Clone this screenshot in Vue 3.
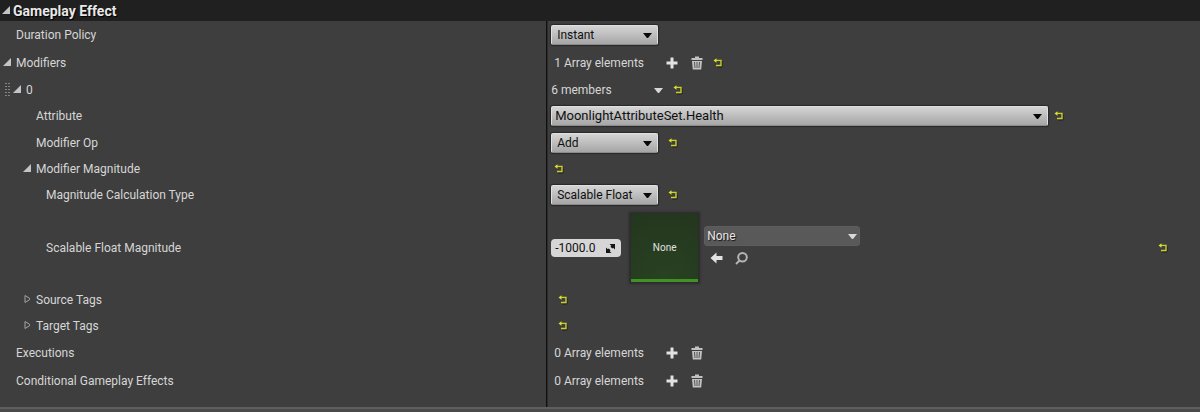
<template>
    <section class="details-panel">
        <header class="category-header">
            <svg class="icon-expanded" viewBox="0 0 8 8"><path d="M8 0V8H0Z" /></svg>
            <h1 class="category-title">Gameplay Effect</h1>
        </header>

        <div class="property-list">
            <div v-for="row in rows" :key="row.id" class="property-row" :class="row.size">
                <div class="name-cell" :class="'level-' + row.level">
                    <svg v-if="row.grip" class="icon-grip" viewBox="0 0 8 14">
                        <path d="M1 0V14M4 0V14" />
                    </svg>
                    <span class="expander-slot">
                        <button
                            v-if="row.expander"
                            class="icon-button"
                            type="button"
                            :aria-label="'Toggle ' + row.name"
                        >
                            <svg v-if="row.expander === 'open'" class="icon-expanded" viewBox="0 0 8 8">
                                <path d="M8 0V8H0Z" />
                            </svg>
                            <svg v-else class="icon-collapsed" viewBox="0 0 8 10">
                                <path d="M2 1.5V8.5L6.5 5.8V4.2Z" />
                            </svg>
                        </button>
                    </span>
                    <label v-if="row.control" :for="row.id">{{ row.name }}</label>
                    <span v-else>{{ row.name }}</span>
                </div>

                <div class="value-cell" :class="row.type">
                    <div v-if="row.type === 'select'" class="combo" :class="{ wide: row.wide }">
                        <select :id="row.id" v-model="row.value">
                            <option>{{ row.value }}</option>
                        </select>
                        <svg class="icon-caret" viewBox="0 0 9 5"><path d="M0 0H9L5 5H4Z" /></svg>
                    </div>

                    <template v-if="row.type === 'array'">
                        <span class="array-count">{{ row.count }} Array elements</span>
                        <button class="icon-button" type="button" aria-label="Add element">
                            <svg class="icon-plus" viewBox="0 0 12 12">
                                <path d="M4.5 0.5H7.5V4.5H11.5V7.5H7.5V11.5H4.5V7.5H0.5V4.5H4.5Z" />
                            </svg>
                        </button>
                        <button class="icon-button trash" type="button" aria-label="Remove all elements">
                            <svg class="icon-trash" viewBox="0 0 12 14">
                                <path class="bin" d="M4 0.5H8V2H11.5V4H0.5V2H4ZM1 5H11L10.2 13.5H1.8Z" />
                                <path class="slots" d="M3.5 6L4 12M6 6V12M8.5 6L8 12" />
                            </svg>
                        </button>
                    </template>

                    <template v-if="row.type === 'members'">
                        <span class="member-count">6 members</span>
                        <button class="icon-button" type="button" aria-label="Element options">
                            <svg class="icon-caret light" viewBox="0 0 9 5"><path d="M0 0H9L5 5H4Z" /></svg>
                        </button>
                    </template>

                    <template v-if="row.type === 'magnitude'">
                        <div class="spin-box">
                            <input :id="row.id" v-model="row.value" type="text">
                            <svg class="icon-drag" viewBox="0 0 9 9">
                                <path d="M3.5 0H9V5.5L7.2 3.7L6.2 4.5L4.5 2.8L5.3 1.8ZM0 3.5L1.8 5.3L2.8 4.5L4.5 6.2L3.7 7.2L5.5 9H0Z" />
                            </svg>
                        </div>
                        <div class="thumbnail">None</div>
                        <div class="asset-picker">
                            <div class="combo asset">
                                <select v-model="curveTable" aria-label="Curve table">
                                    <option>None</option>
                                </select>
                                <svg class="icon-caret light" viewBox="0 0 9 5"><path d="M0 0H9L5 5H4Z" /></svg>
                            </div>
                            <div class="asset-actions">
                                <button class="icon-button" type="button" aria-label="Use selected asset">
                                    <svg class="icon-arrow" viewBox="0 0 13 12">
                                        <path d="M0.5 6L6.5 0.5V4H12.5V8H6.5V11.5Z" />
                                    </svg>
                                </button>
                                <button class="icon-button" type="button" aria-label="Browse to asset">
                                    <svg class="icon-search" viewBox="0 0 13 13">
                                        <circle cx="7.5" cy="5.3" r="4.3" />
                                        <path d="M4.5 8.5L1 12" />
                                    </svg>
                                </button>
                            </div>
                        </div>
                    </template>

                    <button v-if="row.reset" class="icon-button reset" type="button" aria-label="Reset to default">
                        <svg class="icon-reset" viewBox="0 0 10 10">
                            <path class="shade" d="M3 3.5H9V9H4" />
                            <path class="line" d="M2 2.5H8V7.5H3" />
                            <path class="head" d="M0.5 2.5L3.5 0.3V4.7Z" />
                        </svg>
                    </button>
                </div>
            </div>
            <div class="property-row filler">
                <div class="name-cell"></div>
            </div>
        </div>
        <div class="panel-edge"></div>
    </section>
</template>

<script setup>
import { ref } from 'vue'

const curveTable = ref('None')

const rows = ref([
    { id: 'duration', name: 'Duration Policy', level: 0, type: 'select', control: true, value: 'Instant' },
    { id: 'modifiers', name: 'Modifiers', level: 0, expander: 'open', type: 'array', count: 1, reset: true },
    { id: 'modifier-0', name: '0', level: 1, size: 'compact', grip: true, expander: 'open', type: 'members', reset: true },
    {
        id: 'attribute',
        name: 'Attribute',
        level: 2,
        size: 'compact',
        type: 'select',
        control: true,
        wide: true,
        value: 'MoonlightAttributeSet.Health',
        reset: true
    },
    { id: 'modifier-op', name: 'Modifier Op', level: 2, type: 'select', control: true, value: 'Add', reset: true },
    { id: 'magnitude', name: 'Modifier Magnitude', level: 2, size: 'tight', expander: 'open', type: 'group', reset: true },
    {
        id: 'calculation',
        name: 'Magnitude Calculation Type',
        level: 3,
        type: 'select',
        control: true,
        value: 'Scalable Float',
        reset: true
    },
    {
        id: 'scalable-float',
        name: 'Scalable Float Magnitude',
        level: 3,
        size: 'tall',
        type: 'magnitude',
        control: true,
        value: '-1000.0',
        reset: true
    },
    { id: 'source-tags', name: 'Source Tags', level: 2, size: 'compact', expander: 'closed', type: 'tags', reset: true },
    { id: 'target-tags', name: 'Target Tags', level: 2, size: 'compact', expander: 'closed', type: 'tags', reset: true },
    { id: 'executions', name: 'Executions', level: 0, type: 'array', count: 0 },
    { id: 'conditional', name: 'Conditional Gameplay Effects', level: 0, type: 'array', count: 0 }
])
</script>

<style>
body {
    background-color: #3e3e3e;
}
</style>

<style scoped>
.details-panel {
    font-family: Roboto, sans-serif;
    font-size: 12px;
    line-height: 16px;
    color: #d6d6d6;
    background-color: #3e3e3e;
}

.details-panel *,
.details-panel {
    box-sizing: border-box;
}

svg {
    display: block;
    flex: none;
}

.category-header {
    display: flex;
    align-items: center;
    gap: 3px;
    height: 21px;
    padding-left: 2px;
    background-color: #202020;
}

.category-title {
    margin: 0;
    font-size: 14px;
    font-weight: 700;
    line-height: 20px;
    color: #e8e8e8;
    text-shadow: 1px 1px 1px #000;
}

.property-row {
    display: grid;
    grid-template-columns: 45.6% minmax(0, 1fr);
    height: 28px;
}

.property-row.compact {
    height: 26px;
}

.property-row.tight {
    height: 24px;
}

.property-row.tall {
    height: 78px;
}

.property-row.filler {
    height: 12px;
}

.name-cell {
    display: flex;
    align-items: center;
    padding-left: 3px;
    border-right: 1px solid #101010;
    box-shadow: 1px 0 0 #2c2c2c;
}

.name-cell.level-1 {
    padding-left: 5px;
}

.name-cell.level-2 {
    padding-left: 23px;
}

.name-cell.level-3 {
    padding-left: 33px;
}

.expander-slot {
    flex: none;
    width: 13px;
}

.value-cell {
    display: flex;
    align-items: center;
    padding-left: 4px;
}

.value-cell.array,
.value-cell.group {
    padding-left: 7px;
}

.value-cell.tags {
    padding-left: 11px;
}

.value-cell.magnitude {
    padding-right: 32px;
}

.icon-button {
    display: flex;
    align-items: center;
    justify-content: center;
    padding: 0;
    border: none;
    background: none;
    cursor: pointer;
}

.array-count {
    width: 112px;
}

.member-count {
    width: 103px;
}

.trash {
    margin-left: 13px;
}

.reset {
    margin-left: 10px;
}

.combo.wide + .reset {
    margin-left: 6px;
}

.group .reset,
.tags .reset {
    margin-left: 0;
}

.magnitude .reset {
    margin-left: auto;
}

/* Combo boxes */
.combo {
    position: relative;
    width: 107px;
}

.combo select {
    display: block;
    width: 100%;
    height: 20px;
    padding: 0 18px 0 5px;
    appearance: none;
    border: 1px solid #e0e0e0;
    border-bottom-color: #8a8a8a;
    border-radius: 2px;
    background: linear-gradient(#d4d4d4, #a6a6a6);
    box-shadow: 0 0 1px 1px #292929;
    color: #101010;
    font: inherit;
}

.combo.wide {
    flex: 0 1 497px;
}

.combo.wide select {
    padding-left: 3px;
    font-size: 13px;
}

.combo.asset {
    width: 156px;
}

.combo.asset select {
    padding-left: 2px;
    border-color: #5d5d5d;
    border-radius: 3px;
    background: #595959;
    box-shadow: none;
    color: #e6e6e6;
    text-shadow: 1px 1px 1px #111;
}

.combo .icon-caret {
    position: absolute;
    top: 8px;
    right: 6px;
    pointer-events: none;
}

.combo.asset .icon-caret {
    right: 3px;
}

.spin-box {
    display: flex;
    align-items: center;
    width: 70px;
    height: 18px;
    padding: 0 6px 0 4px;
    border-radius: 4px;
    background-color: #d6d6d6;
}

.spin-box input {
    flex: 1;
    min-width: 0;
    padding: 0;
    border: none;
    background: none;
    color: #101010;
    font: inherit;
}

.thumbnail {
    display: flex;
    align-items: center;
    justify-content: center;
    width: 67px;
    height: 68px;
    margin-left: 10px;
    padding-top: 3px;
    border-bottom: 3px solid #3f9224;
    background: radial-gradient(circle at 50% 100%, #294222, #23361e);
    box-shadow: 0 0 2px 2px #2b2b2b;
    font-size: 10px;
    color: #e0e0e0;
}

.asset-picker {
    margin-left: 6px;
}

.asset-actions {
    display: flex;
    align-items: center;
    gap: 12px;
    height: 24px;
    padding-left: 6px;
}

/* Icons */
.icon-expanded {
    width: 8px;
    height: 8px;
    margin-bottom: 2px;
    fill: #c4c4c4;
}

.icon-collapsed {
    width: 8px;
    height: 10px;
    margin-bottom: 2px;
    fill: none;
    stroke: #a4a4a4;
}

.icon-grip {
    width: 8px;
    height: 14px;
    fill: none;
    stroke: #858585;
    stroke-width: 2;
    stroke-dasharray: 1 2;
}

.icon-caret {
    width: 9px;
    height: 5px;
    fill: #080808;
}

.icon-caret.light {
    fill: #d8d8d8;
}

.icon-plus {
    width: 12px;
    height: 12px;
    fill: #e2e2e2;
}

.icon-trash {
    width: 12px;
    height: 14px;
}

.icon-trash .bin {
    fill: #c2c2c2;
}

.icon-trash .slots {
    fill: none;
    stroke: #555;
}

.icon-reset {
    width: 10px;
    height: 10px;
    fill: none;
}

.icon-reset .shade {
    stroke: #1d1d1d;
}

.icon-reset .line {
    stroke: #c9cf2c;
    stroke-width: 1.4;
}

.icon-reset .head {
    fill: #dde02e;
}

.icon-drag {
    width: 9px;
    height: 9px;
    fill: #151515;
}

.icon-arrow {
    width: 13px;
    height: 12px;
    fill: #e2e2e2;
}

.icon-search {
    width: 13px;
    height: 13px;
    fill: none;
    stroke: #b4b4b4;
    stroke-width: 2;
}

.panel-edge {
    height: 5px;
    border-top: 2px solid #5e5e5e;
    background-color: #4a4a4a;
}
</style>
